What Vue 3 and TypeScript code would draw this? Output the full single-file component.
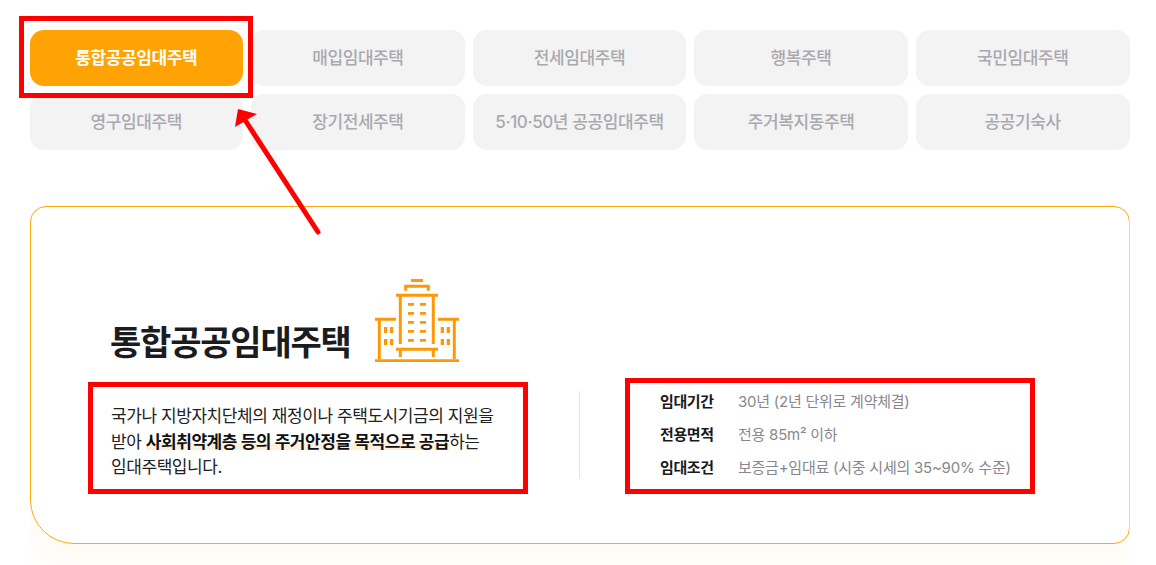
<script setup lang="ts">
const tabs: string[] = ['통합공공임대주택','매입임대주택','전세임대주택','행복주택','국민임대주택','영구임대주택','장기전세주택','5·10·50년 공공임대주택','주거복지동주택','공공기숙사']
const rows: { k: string; v: string }[] = [
  { k: '임대기간', v: '30년 (2년 단위로 계약체결)' },
  { k: '전용면적', v: '전용 85m² 이하' },
  { k: '임대조건', v: '보증금+임대료 (시중 시세의 35~90% 수준)' },
]
const winRows: number[] = [34.3, 43.3, 52.3, 61.3, 70.3]
</script>

<template>
  <div class="page">
    <div class="tabs">
      <div v-for="(t, i) in tabs" :key="t" class="tab" :class="{ active: i === 0 }">{{ t }}</div>
    </div>
    <section class="card">
      <div class="head">
        <h2>통합공공임대주택</h2>
        <svg class="icon" viewBox="15 8 84 84" width="84" height="84" fill="none" stroke="#ff9808" stroke-width="3">
          <path d="M51 10.5h12M45.7 20.7v-4.5h22.6v4.5M36 25.3h42M40.3 25.3V74M73.3 25.3V74M15 49.3h21M19.3 49.3V89M78 49.3h21M94.3 49.3V89M36 79.3h42M40.3 79.3V87M73.3 79.3V87M15 90.7h84" />
          <g stroke="none" fill="#ff9808">
            <template v-for="y in winRows" :key="y">
              <rect x="48" :y="y - 1.3" width="6" height="2.8" />
              <rect x="60" :y="y - 1.3" width="6" height="2.8" />
            </template>
            <rect x="24" y="57" width="3.3" height="6" /><rect x="30" y="57" width="3.3" height="6" />
            <rect x="24" y="69" width="3.3" height="6" /><rect x="30" y="69" width="3.3" height="6" />
            <rect x="80.7" y="57" width="3.3" height="6" /><rect x="86.7" y="57" width="3.3" height="6" />
            <rect x="80.7" y="69" width="3.3" height="6" /><rect x="86.7" y="69" width="3.3" height="6" />
          </g>
        </svg>
      </div>
      <div class="body">
        <p class="desc">국가나 지방자치단체의 재정이나 주택도시기금의 지원을 받아 <strong>사회취약계층 등의 주거안정을 목적으로 공급</strong>하는 임대주택입니다.</p>
        <dl class="info">
          <div v-for="r in rows" :key="r.k" class="row">
            <dt>{{ r.k }}</dt>
            <dd>{{ r.v }}</dd>
          </div>
        </dl>
      </div>
    </section>

    <div class="mark m1"></div>
    <div class="mark m2"></div>
    <div class="mark m3"></div>
    <svg class="arrow" width="1156" height="565" viewBox="0 0 1156 565" fill="none">
      <path d="M318 232L245 120" stroke="#ff0000" stroke-width="5" stroke-linecap="round" />
      <path d="M238 109L235 127L257 114Z" fill="#ff0000" />
    </svg>
  </div>
</template>

<style>
html, body { margin: 0; background: #fff; }
</style>

<style scoped>
.page {
  position: relative;
  width: 1156px;
  height: 565px;
  overflow: hidden;
  box-sizing: border-box;
  padding: 30px 26.5px 0 29.5px;
  font-family: Inter, "Noto Sans CJK KR", sans-serif;
}
.tabs {
  display: grid;
  grid-template-columns: repeat(5, 1fr);
  gap: 8px;
}
.tab {
  height: 56px;
  box-sizing: border-box;
  padding-bottom: 3px;
  display: flex;
  align-items: center;
  justify-content: center;
  border-radius: 14px;
  background: #f3f3f4;
  color: #a9a9ae;
  font-size: 17px;
  font-weight: 500;
  letter-spacing: -0.4px;
}
.tab.active {
  background: #ffa305;
  color: #fff;
  font-weight: 700;
}
.card {
  margin-top: 56px;
  height: 338px;
  box-sizing: border-box;
  border: 1px solid #ffa80f;
  border-radius: 16px 16px 16px 44px;
  background: #fff;
  box-shadow: 0 20px 30px rgba(255, 170, 40, 0.06);
  clip-path: inset(-2px 0 -40px 0);
  padding: 71px 80px 0 79.5px;
}
.head {
  display: flex;
  align-items: flex-end;
  gap: 24px;
  height: 84px;
}
h2 {
  margin: 0 0 -5px;
  font-size: 34px;
  line-height: 48px;
  font-weight: 700;
  color: #1c1c1e;
  letter-spacing: -1.2px;
}
.body {
  display: flex;
  margin-top: 29px;
  height: 88px;
  margin-left: 1px;
}
.desc {
  width: 389px;
  margin: 0;
  padding-top: 13px;
  font-size: 17px;
  line-height: 25.5px;
  letter-spacing: -0.43px;
  word-break: keep-all;
  color: #222;
  flex: none;
  box-sizing: border-box;
}
.desc strong {
  font-weight: 700;
  color: #111;
  background: linear-gradient(transparent 54%, #ffeeda 54%, #ffeeda 90%, transparent 90%);
}
.info {
  margin: 0 0 0 79px;
  padding-left: 80px;
  border-left: 1px solid #e4e4e4;
  flex: none;
  display: flex;
  flex-direction: column;
  justify-content: space-between;
  height: 88px;
}
.row {
  display: flex;
  align-items: center;
  height: 22px;
  position: relative;
  top: -2px;
}
dt {
  width: 78px;
  font-size: 15px;
  font-weight: 700;
  color: #1a1a1a;
  letter-spacing: -0.4px;
}
dd {
  margin: 0;
  font-size: 15px;
  color: #87878c;
  letter-spacing: -0.24px;
}
.mark {
  position: absolute;
  box-sizing: border-box;
  border: 5px solid #ff0000;
}
.m1 { left: 19px; top: 16px; width: 234px; height: 82px; }
.m2 { left: 88px; top: 382px; width: 440px; height: 112px; }
.m3 { left: 625px; top: 378px; width: 410px; height: 116px; }
.arrow { position: absolute; left: 0; top: 0; pointer-events: none; }
</style>
